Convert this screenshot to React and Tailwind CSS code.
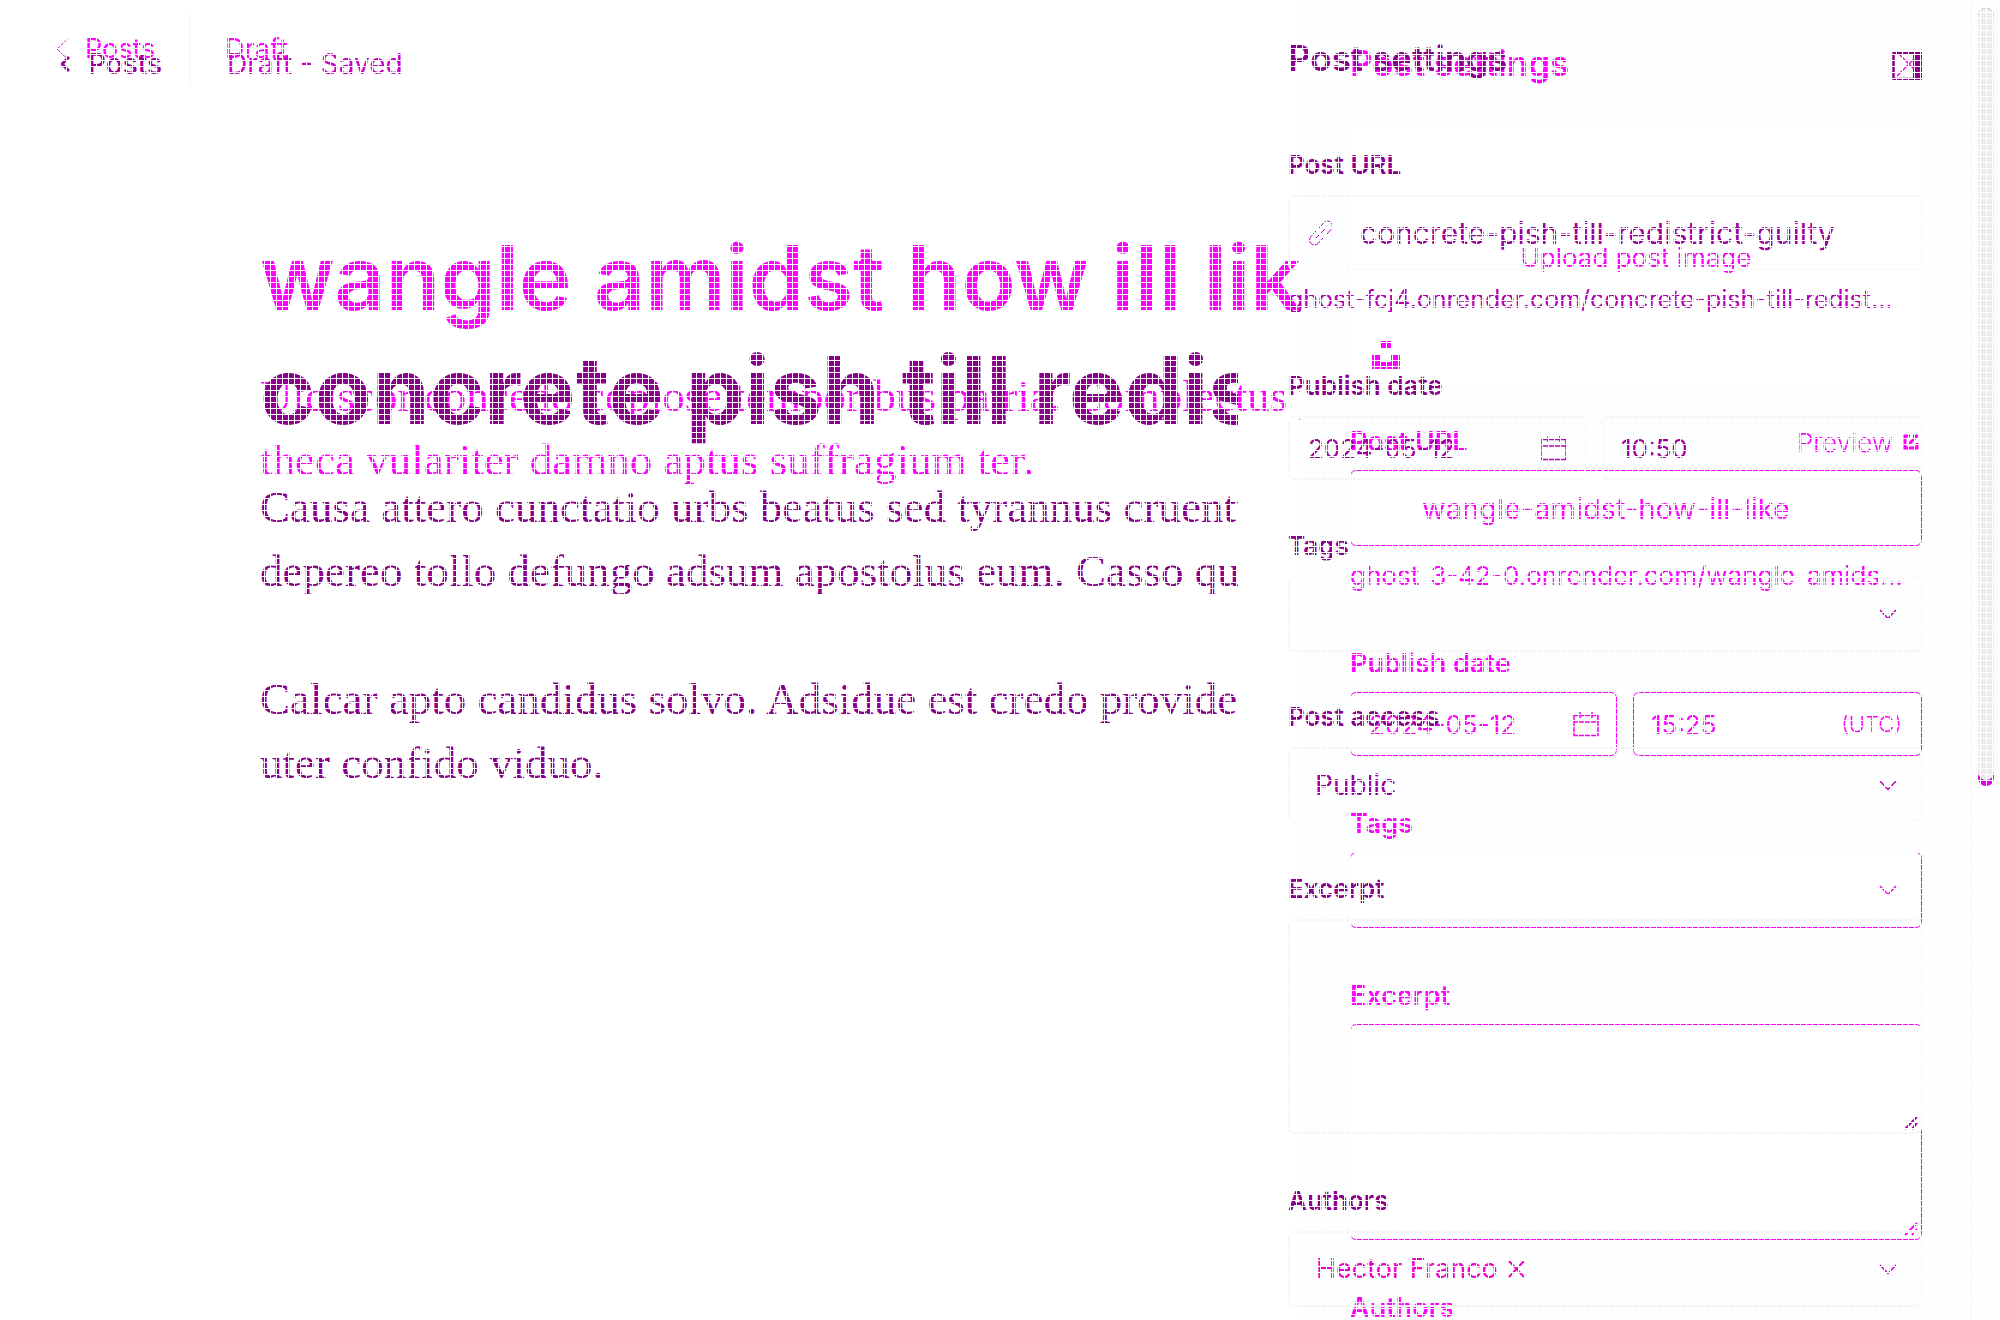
import React from "react";

const Chevron = ({ className }) => (
  <svg viewBox="0 0 18 11" className={"pointer-events-none h-[11px] w-[18px] " + className} fill="none" stroke="currentColor" strokeWidth="1.5" aria-hidden="true">
    <path d="M1 1l8 8.500 8-8.500" />
  </svg>
);

const Calendar = ({ className }) => (
  <svg viewBox="0 0 26 26" className={"h-[26px] w-[26px] shrink-0 " + className} fill="none" stroke="currentColor" strokeWidth="1.500" aria-hidden="true">
    <path d="M1 4.500h24v20H1zM1 11h24M7 1v6M19 1v6" />
  </svg>
);

const Grip = ({ className }) => (
  <svg viewBox="0 0 14 14" className={"pointer-events-none absolute right-1 bottom-1 h-[14px] w-[14px] " + className} fill="none" stroke="currentColor" strokeWidth="2" aria-hidden="true">
    <path d="M1 13L13 1M8 13l5-6" />
  </svg>
);

const themes = {
  bright: {
    label: "text-[27px] font-semibold text-[#ff00ff]",
    box: "border border-[#ff00ff] bg-white",
    text: "text-[#ff00ff]",
    icon: "text-[#f000f0]",
    gap: "gap-[12px]",
    dateWidth: "w-[267px]",
  },
  deep: {
    label: "text-[26px] font-semibold text-[#8b008b]",
    box: "border-2 border-[#f6f6f6] bg-transparent",
    text: "text-[#9b009b]",
    icon: "text-[#c000c0]",
    gap: "gap-[14px]",
    dateWidth: "w-[298px]",
  },
};

function Field({ t, id, label, action, hint, className, children }) {
  return (
    <div className={className}>
      <div className={"flex flex-col " + t.gap}>
        <div className="flex h-8 items-center justify-between">
          <label htmlFor={id} className={"leading-8 " + t.label}>{label}</label>
          {action}
        </div>
        {children}
      </div>
      {hint}
    </div>
  );
}

function SelectBox({ t, id, value, height }) {
  return (
    <div className="relative flex items-center">
      <select id={id} defaultValue={value} className={"w-full appearance-none rounded-md px-[25px] text-[28px] outline-none " + height + " " + t.box + " " + t.text}>
        <option value={value}>{value}</option>
      </select>
      <Chevron className={"absolute right-[25px] " + t.icon} />
    </div>
  );
}

function DateRow({ t, id, date, time, zone }) {
  return (
    <div className="flex gap-4">
      <div className={"flex h-16 items-center rounded-md pr-[17px] pl-[18px] " + t.dateWidth + " " + t.box}>
        <input id={id} defaultValue={date} className={"w-full min-w-0 bg-transparent text-[26px] outline-none " + t.text} />
        <Calendar className={t.icon} />
      </div>
      <div className={"flex h-16 min-w-0 flex-1 items-center rounded-md pr-[19px] pl-[17px] " + t.box}>
        <input aria-label="Publish time" defaultValue={time} className={"w-full min-w-0 bg-transparent text-[26px] outline-none " + t.text} />
        {zone && <span className={"text-[22px] font-light " + t.text}>{zone}</span>}
      </div>
    </div>
  );
}

function BrightLayer() {
  const t = themes.bright;
  return (
    <div className="col-start-1 row-start-1 flex min-h-0 min-w-0 overflow-hidden">
      <main className="min-w-0 flex-1 overflow-hidden">
        <header className="flex h-[98px] items-center pl-[56px] text-[27px] text-[#ff00ff]">
          <a href="#posts" className="flex w-[133px] items-center gap-[17px]">
            <svg viewBox="0 0 12 22" className="h-[22px] w-3" fill="none" stroke="currentColor" strokeWidth="1" aria-hidden="true">
              <path d="M11.500 1L1 11l10.500 10" />
            </svg>
            Posts
          </a>
          <div className="h-[72px] w-[2px] bg-[#f5f8f9]" />
          <span className="pl-[34px]">Draft</span>
        </header>
        <article className="pl-[260px] whitespace-nowrap text-[#ff00ff]">
          <h1 className="mt-[130px] text-[89px] leading-[100px] font-semibold">wangle amidst how ill like</h1>
          <p className="mt-[36px] font-['Liberation_Serif',serif] text-[45px] leading-[64px]">
            Ulciscor concedo copiose temporibus patria. Complectus pauci
            <br />
            theca vulariter damno aptus suffragium ter.
          </p>
        </article>
      </main>
      <aside className="w-[670px] shrink-0 bg-[#fbfdff] pr-12 pl-[50px]">
        <div className="flex h-[127px] items-center justify-between">
          <h2 className="text-[35px] font-semibold text-[#ff00ff]">Post settings</h2>
          <button type="button" aria-label="Close settings" className="text-[#ff00ff]">
            <svg viewBox="0 0 26 26" className="h-[26px] w-[26px]" fill="none" stroke="currentColor" strokeWidth="1.500" aria-hidden="true">
              <path d="M1 1l24 24M25 1L1 25" />
            </svg>
          </button>
        </div>
        <button type="button" className="relative flex h-[260px] w-full items-center justify-center rounded bg-white text-[26px] text-[#ff00ff]">
          Upload post image
          <svg viewBox="0 0 28 30" className="absolute bottom-[17px] left-[22px] h-[30px] w-7" fill="currentColor" aria-hidden="true">
            <path d="M9 1h10v8H9zM0 14h9v8h10v-8h9v15H0z" />
          </svg>
        </button>
        <Field
          t={t}
          id="b-url"
          label="Post URL"
          className="mt-[39px]"
          action={
            <a href="#preview" className="flex items-center gap-[10px] pr-[3px] text-[26px] font-light text-[#ff00ff]">
              Preview
              <svg viewBox="0 0 16 16" className="h-4 w-4" fill="none" stroke="currentColor" strokeWidth="3" aria-hidden="true">
                <path d="M7 2H2v12h12V9M6 10l8-8M10 2h5" />
              </svg>
            </a>
          }
          hint={<p className="mt-[14px] h-8 truncate pr-3 text-[26px] leading-8 text-[#ff00ff]">ghost-3-42-0.onrender.com/wangle-amidst-how-ill-like/</p>}
        >
          <input id="b-url" defaultValue="wangle-amidst-how-ill-like" className={"h-[76px] w-full rounded-md pl-[71px] text-[29px] outline-none " + t.box + " " + t.text} />
        </Field>
        <Field t={t} id="b-date" label="Publish date" className="mt-[56px]">
          <DateRow t={t} id="b-date" date="2024-05-12" time="15:25" zone="(UTC)" />
        </Field>
        <Field t={t} id="b-tags" label="Tags" className="mt-[52px]">
          <SelectBox t={t} id="b-tags" value="" height="h-[76px]" />
        </Field>
        <Field t={t} id="b-excerpt" label="Excerpt" className="mt-[52px]">
          <div className="relative flex">
            <textarea id="b-excerpt" className={"h-[216px] w-full resize-none rounded-md outline-none " + t.box} />
            <Grip className="text-[#ff00ff]" />
          </div>
        </Field>
        <h3 className={"mt-[52px] leading-8 " + t.label}>Authors</h3>
      </aside>
      <div className="w-[30px] shrink-0 border-l-2 border-[#f8f9fa] bg-[#fdfdfe] pt-[8px] pl-[6px]">
        <div className="h-[778px] w-4 rounded-full bg-[#e000e0]">
          <div className="h-[772px] w-4 rounded-full bg-[#ececec]" />
        </div>
      </div>
    </div>
  );
}

function DeepLayer() {
  const t = themes.deep;
  return (
    <div className="z-10 col-start-1 row-start-1 flex min-h-0 min-w-0 overflow-hidden">
      <main className="min-w-0 flex-1 overflow-hidden">
        <header className="flex h-[128px] items-center pl-[60px] text-[28px]">
          <a href="#all-posts" className="flex w-[167px] items-center gap-[18px] font-medium text-[#9b009b]">
            <svg viewBox="0 0 10 16" className="h-4 w-[10px]" fill="none" stroke="currentColor" strokeWidth="3" aria-hidden="true">
              <path d="M9 1L2 8l7 7" />
            </svg>
            Posts
          </a>
          <span className="text-[#c800c8]">Draft - Saved</span>
        </header>
        <article className="pl-[260px] whitespace-nowrap text-[#8b008b]">
          <h1 className="mt-[212px] text-[93px] leading-[100px] font-bold">concrete pish till redistrict guilty</h1>
          <div className="mt-[35px] flex flex-col gap-16 font-['Liberation_Serif',serif] text-[45px] leading-[64px]">
            <p>
              Causa attero cunctatio urbs beatus sed tyrannus cruentus
              <br />
              depereo tollo defungo adsum apostolus eum. Casso quo
            </p>
            <p>
              Calcar apto candidus solvo. Adsidue est credo providence
              <br />
              uter confido viduo.
            </p>
          </div>
        </article>
      </main>
      <aside className="w-[762px] shrink-0 pr-[78px] pl-[50px]">
        <div className="flex h-[116px] items-center justify-between">
          <h2 className="text-[35px] font-semibold text-[#8b008b]">Post settings</h2>
          <button type="button" aria-label="Toggle settings panel" className="mt-4 text-[#8b008b]">
            <svg viewBox="0 0 30 28" className="h-7 w-[30px]" aria-hidden="true">
              <path d="M1.500 1h27v26h-27z" fill="none" stroke="currentColor" strokeWidth="2.500" />
              <path d="M21 0h9v28h-9z" fill="currentColor" />
            </svg>
          </button>
        </div>
        <Field
          t={t}
          id="d-url"
          label="Post URL"
          className="mt-[33px]"
          hint={<p className="mt-[12px] h-8 truncate pr-7 text-[25px] leading-8 text-[#b400b4]">ghost-fcj4.onrender.com/concrete-pish-till-redistrict-guilty/</p>}
        >
          <div className="relative flex items-center">
            <svg viewBox="0 0 26 26" className="absolute left-[20px] h-[26px] w-[26px] text-[#c000c0]" fill="none" stroke="currentColor" strokeWidth="1" aria-hidden="true">
              <path d="M8 18L18 8M11 8l5-5.500a4.500 4.500 0 0 1 7 7L18 15M15 18l-5 5.500a4.500 4.500 0 0 1-7-7L8 11" />
            </svg>
            <input id="d-url" defaultValue="concrete-pish-till-redistrict-guilty" className={"h-[76px] w-full rounded-md pl-[70px] text-[30px] outline-none " + t.box + " " + t.text} />
          </div>
        </Field>
        <Field t={t} id="d-date" label="Publish date" className="mt-[55px]">
          <DateRow t={t} id="d-date" date="2024-05-12" time="10:50" />
        </Field>
        <Field t={t} id="d-tags" label="Tags" className="mt-[50px]">
          <SelectBox t={t} id="d-tags" value="" height="h-[76px]" />
        </Field>
        <Field t={t} id="d-access" label="Post access" className="mt-[49px]">
          <SelectBox t={t} id="d-access" value="Public" height="h-[76px]" />
        </Field>
        <Field t={t} id="d-excerpt" label="Excerpt" className="mt-[50px]">
          <div className="relative flex">
            <textarea id="d-excerpt" className={"h-[215px] w-full resize-none rounded-md outline-none " + t.box} />
            <Grip className="text-[#a000a0]" />
          </div>
        </Field>
        <div className="mt-[51px] flex flex-col gap-[14px]">
          <h3 className={"leading-8 " + t.label}>Authors</h3>
          <div className={"flex h-[76px] items-center rounded-md pr-[23px] pl-[26px] text-[27px] text-[#f000c8] " + t.box}>
            <span>Hector Franco</span>
            <button type="button" aria-label="Remove Hector Franco" className="ml-[10px]">
              <svg viewBox="0 0 17 18" className="h-[18px] w-[17px]" fill="none" stroke="currentColor" strokeWidth="2" aria-hidden="true">
                <path d="M1 1l15 16M16 1L1 17" />
              </svg>
            </button>
            <Chevron className={"ml-auto " + t.icon} />
          </div>
        </div>
      </aside>
    </div>
  );
}

export default function App() {
  return (
    <div className="relative grid h-screen grid-cols-[minmax(0,1fr)] grid-rows-[minmax(0,1fr)] overflow-hidden bg-white font-['Inter',sans-serif]">
      <BrightLayer />
      <DeepLayer />
      <div className="pointer-events-none absolute inset-0 z-20 bg-[linear-gradient(to_right,#fff_1px,transparent_1px),linear-gradient(to_bottom,#fff_1px,transparent_1px)] bg-[size:6px_6px]" />
    </div>
  );
}
